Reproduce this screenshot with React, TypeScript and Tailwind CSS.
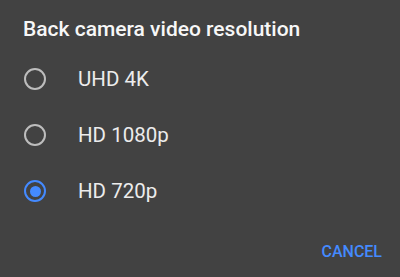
import React from "react";

const options = ["UHD 4K", "HD 1080p", "HD 720p"];

const Radio = ({ checked }: { checked: boolean }) => {
  return (
    <div
      className={`w-[22px] h-[22px] rounded-full border-2 flex items-center justify-center ${
        checked ? "border-[#448aff]" : "border-[#bdbdbd]"
      }`}
    >
      {checked && <div className="w-[11px] h-[11px] rounded-full bg-[#448aff]" />}
    </div>
  );
};

const App = () => {
  const selected = 2;
  return (
    <div
      className="w-[400px] h-[277px] bg-[#424242] flex flex-col overflow-hidden"
      style={{ fontFamily: "Roboto, 'Noto Sans', sans-serif" }}
    >
      <h2 className="pt-[17px] pl-[23px] text-[21px] leading-[24px] font-medium text-[#f7f7f7]">
        Back camera video resolution
      </h2>
      <div className="mt-[10px] flex flex-col">
        {options.map((opt, i) => (
          <div key={opt} className="h-[56px] flex items-center pl-[24px]">
            <Radio checked={i === selected} />
            <span className="ml-[32px] text-[20.5px] leading-[24px] text-[#ececec]">
              {opt}
            </span>
          </div>
        ))}
      </div>
      <div className="flex justify-end mt-[23px] pr-[18px]">
        <button className="text-[16px] leading-[20px] font-medium text-[#448aff]">
          CANCEL
        </button>
      </div>
    </div>
  );
};

export default App;
